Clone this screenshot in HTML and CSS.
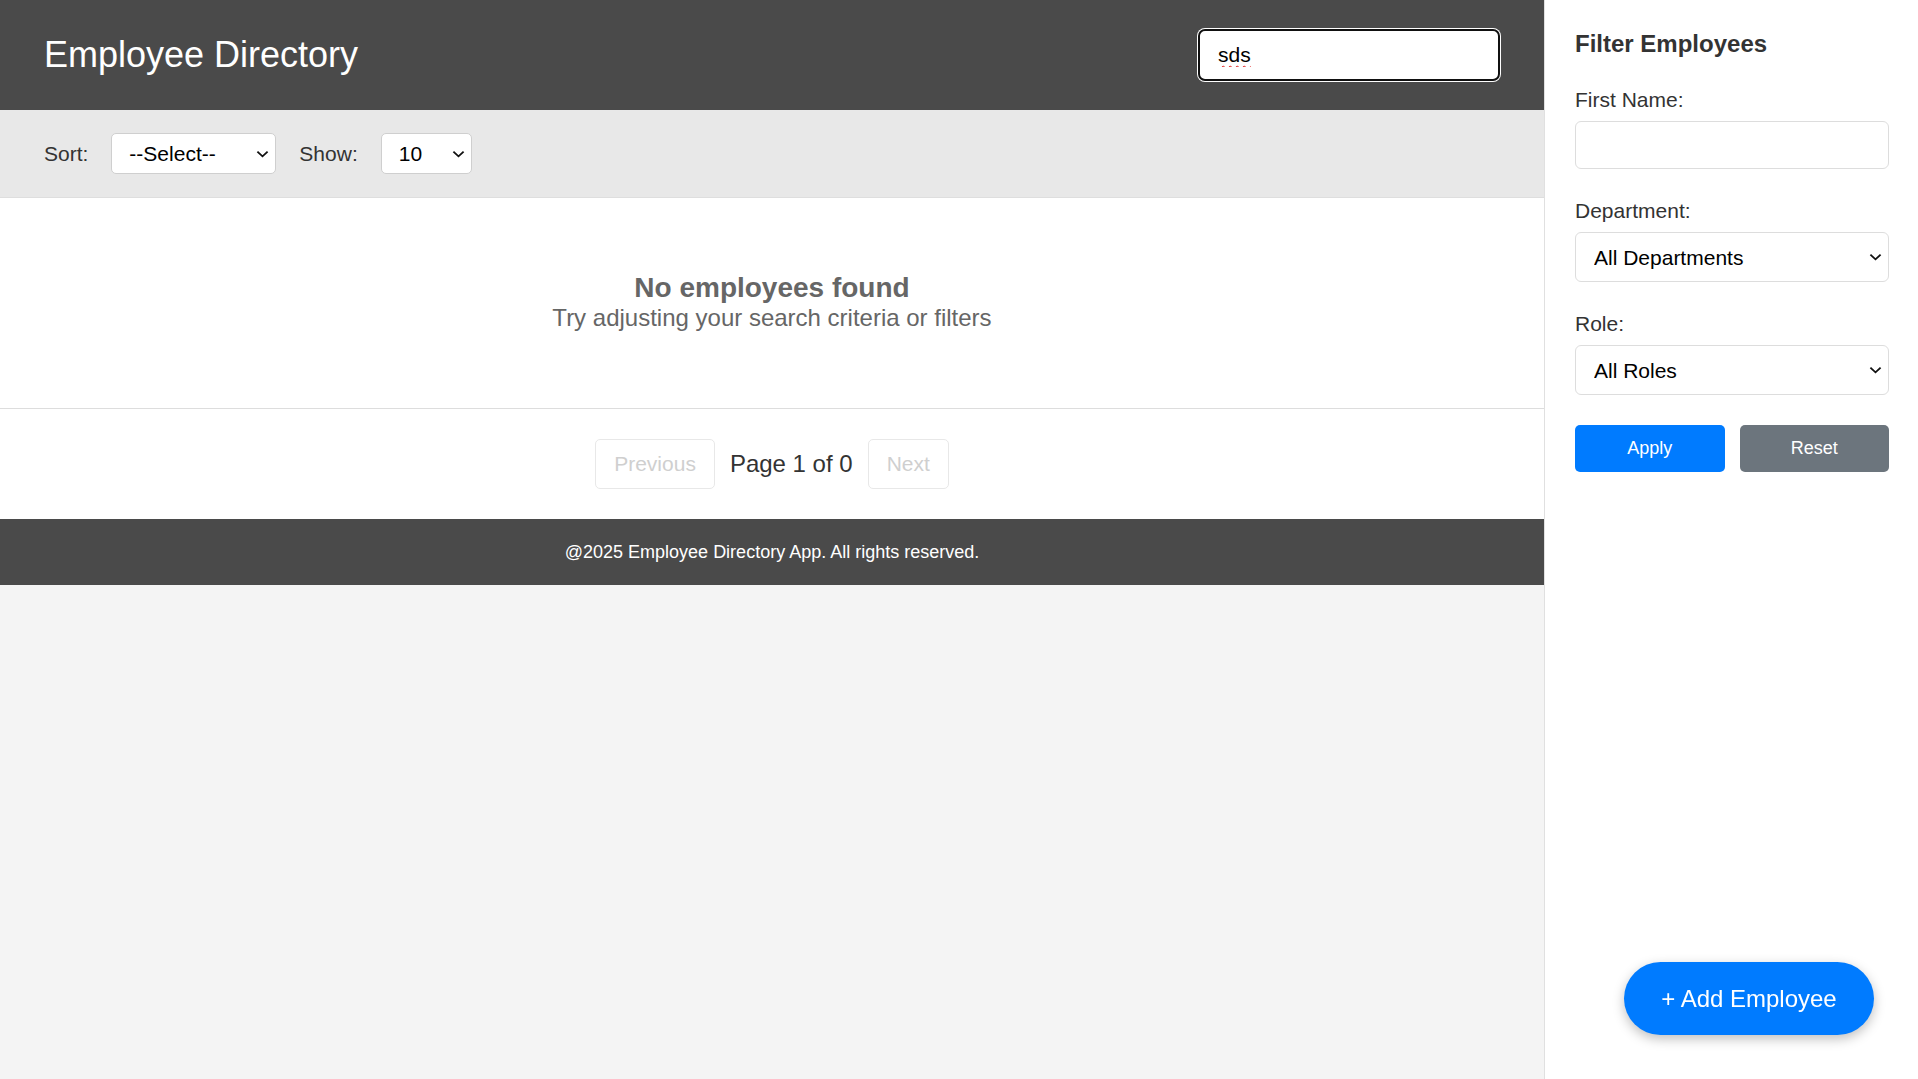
FILE: index.html
```html
<!DOCTYPE html>
<html lang="en">
<head>
<meta charset="utf-8">
<title>Employee Directory</title>
<link rel="stylesheet" href="styles.css">
</head>
<body>
<div class="layout">
  <div class="main">
    <header class="app-header">
      <h1 class="app-title">Employee Directory</h1>
      <input class="search-input" type="text" value="sds" aria-label="Search">
    </header>
    <div class="toolbar">
      <label class="toolbar-label" for="sort">Sort:</label>
      <select id="sort" class="select select-sort">
        <option>--Select--</option>
      </select>
      <label class="toolbar-label" for="show">Show:</label>
      <select id="show" class="select select-show">
        <option>10</option>
      </select>
    </div>
    <section class="content">
      <div class="empty-state">
        <h3 class="empty-title">No employees found</h3>
        <p class="empty-text">Try adjusting your search criteria or filters</p>
      </div>
    </section>
    <nav class="pagination">
      <button class="page-btn" disabled>Previous</button>
      <span class="page-info">Page 1 of 0</span>
      <button class="page-btn" disabled>Next</button>
    </nav>
    <footer class="app-footer">@2025 Employee Directory App. All rights reserved.</footer>
  </div>
  <aside class="sidebar">
    <h3 class="sidebar-title">Filter Employees</h3>
    <div class="form-group">
      <label class="form-label" for="fname">First Name:</label>
      <input id="fname" class="form-control" type="text">
    </div>
    <div class="form-group">
      <label class="form-label" for="dept">Department:</label>
      <select id="dept" class="select form-select">
        <option>All Departments</option>
      </select>
    </div>
    <div class="form-group">
      <label class="form-label" for="role">Role:</label>
      <select id="role" class="select form-select">
        <option>All Roles</option>
      </select>
    </div>
    <div class="form-actions">
      <button class="btn btn-apply">Apply</button>
      <button class="btn btn-reset">Reset</button>
    </div>
  </aside>
</div>
<button class="add-btn">+ Add Employee</button>
</body>
</html>
```

FILE: styles.css
```css
* {
  box-sizing: border-box;
}

html, body {
  margin: 0;
  padding: 0;
}

body {
  background: #f4f4f4;
  font-family: "Liberation Sans", Arial, sans-serif;
  color: #333;
}

.layout {
  display: flex;
  align-items: flex-start;
  min-height: 100vh;
}

.main {
  flex: 1;
  min-width: 0;
}

/* Header */
.app-header {
  height: 110px;
  background: #4a4a4a;
  display: flex;
  align-items: center;
  justify-content: space-between;
  padding: 0 43px 0 44px;
}

.app-title {
  margin: 0;
  font-size: 36px;
  font-weight: normal;
  color: #fff;
}

.search-input {
  width: 302px;
  height: 52px;
  margin-right: 1px;
  border: 2px solid #111;
  border-radius: 7px;
  box-shadow: 0 0 0 1px #fff;
  padding: 0 18px;
  font-family: "Liberation Sans", Arial, sans-serif;
  font-size: 21px;
  color: #000;
  outline: none;
  text-decoration: underline wavy #e01b1b;
  text-decoration-thickness: 1px;
  text-underline-offset: 3px;
}

/* Toolbar */
.toolbar {
  height: 88px;
  background: #e8e8e8;
  border-bottom: 1px solid #dedede;
  display: flex;
  align-items: center;
  padding: 0 44px;
}

.toolbar-label {
  font-size: 21px;
  color: #333;
  margin-right: 23px;
}

.select {
  -webkit-appearance: none;
  appearance: none;
  background-color: #fff;
  background-image: url("data:image/svg+xml;utf8,<svg xmlns='http://www.w3.org/2000/svg' width='14' height='8' viewBox='0 0 14 8'><path d='M1.5 1.5 L7 6.5 L12.5 1.5' fill='none' stroke='%23111' stroke-width='2'/></svg>");
  background-repeat: no-repeat;
  background-position: right 6px center;
  background-size: 13px 8px;
  border: 1px solid #cfcfcf;
  border-radius: 5px;
  font-family: "Liberation Sans", Arial, sans-serif;
  font-size: 21px;
  color: #000;
  padding: 0 24px 0 17px;
}

.select-sort {
  width: 165px;
  height: 41px;
  margin-right: 23px;
}

.select-show {
  width: 91px;
  height: 41px;
}

/* Content */
.content {
  background: #fff;
  border-bottom: 1px solid #ddd;
}

.empty-state {
  text-align: center;
  padding: 74px 0 76px;
  color: #666;
}

.empty-title {
  margin: 0;
  font-size: 28px;
  line-height: 32px;
  font-weight: bold;
}

.empty-text {
  margin: 0;
  font-size: 24px;
  line-height: 28px;
}

/* Pagination */
.pagination {
  background: #fff;
  padding: 30px 0;
  display: flex;
  justify-content: center;
  align-items: center;
  gap: 15px;
}

.page-btn {
  height: 50px;
  padding: 0 18px;
  background: #fff;
  border: 1px solid #e8e8e8;
  border-radius: 5px;
  font-family: "Liberation Sans", Arial, sans-serif;
  font-size: 21px;
  color: #cfcfcf;
}

.page-info {
  font-size: 24px;
  color: #333;
}

/* Footer */
.app-footer {
  background: #4a4a4a;
  color: #fff;
  text-align: center;
  font-size: 18px;
  line-height: 22px;
  padding: 22px 0;
}

/* Sidebar */
.sidebar {
  width: 374px;
  flex-shrink: 0;
  min-height: 100vh;
  background: #fff;
  border-left: 1px solid #e0e0e0;
  padding: 30px 29px 30px 30px;
}

.sidebar-title {
  margin: 0 0 30px;
  font-size: 24px;
  font-weight: bold;
  color: #333;
}

.form-group {
  margin-bottom: 30px;
}

.form-label {
  display: block;
  font-size: 21px;
  line-height: 24px;
  color: #333;
  margin-bottom: 9px;
}

.form-control {
  display: block;
  width: 100%;
  height: 48px;
  border: 1px solid #ddd;
  border-radius: 6px;
  padding: 0 18px;
  font-family: "Liberation Sans", Arial, sans-serif;
  font-size: 21px;
}

.form-select {
  display: block;
  width: 100%;
  height: 50px;
  border-color: #ddd;
  border-radius: 6px;
  padding-left: 18px;
}

.form-actions {
  display: flex;
  gap: 15px;
}

.btn {
  flex: 1;
  height: 47px;
  border: none;
  border-radius: 5px;
  color: #fff;
  font-family: "Liberation Sans", Arial, sans-serif;
  font-size: 18px;
}

.btn-apply {
  background: #007bff;
}

.btn-reset {
  background: #6c757d;
}

/* Floating add button */
.add-btn {
  position: fixed;
  right: 44px;
  bottom: 44px;
  width: 250px;
  height: 73px;
  border: none;
  border-radius: 40px;
  background: #007bff;
  color: #fff;
  font-family: "Liberation Sans", Arial, sans-serif;
  font-size: 24px;
  box-shadow: 0 4px 12px rgba(0, 0, 0, 0.25);
}
```
